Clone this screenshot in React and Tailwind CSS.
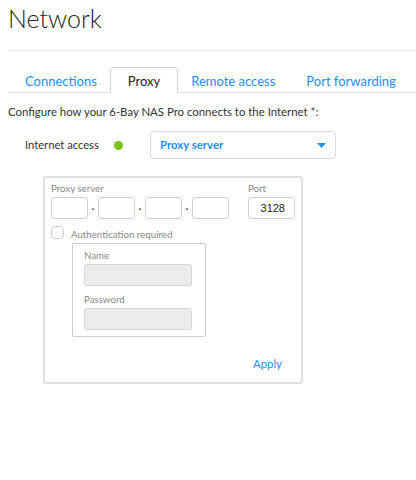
export default function App() {
  const blue = "text-[#1d8ff0]";
  const tabs = ["Connections", "Proxy", "Remote access", "Port forwarding"];
  return (
    <div className="w-[416px] h-[480px] bg-white font-['Lato','Noto_Sans',sans-serif] text-[#333]">
      <div className="pl-2">
        <h1 className="pt-[4px] text-[25px] leading-[29px] font-light text-[#222]">Network</h1>
        <div className="mt-[17px] border-t border-[#e6e6e6]" />
      </div>

      <div className="mt-[16px] ml-2 flex border-b border-[#dcdcdc] pl-[1.5px]">
        {tabs.map((t) =>
          t === "Proxy" ? (
            <div
              key={t}
              className="relative -mx-[2px] -mb-px shrink-0 whitespace-nowrap rounded-t-[4px] border border-[#d4d4d4] border-b-white bg-white px-[16.5px] pt-[5px] pb-[3px] text-[13px] leading-4 text-[#222]"
            >
              {t}
            </div>
          ) : (
            <div
              key={t}
              className={`-mb-px shrink-0 whitespace-nowrap border border-transparent px-[14.5px] pt-[5px] pb-[3px] text-[13px] leading-4 ${blue}`}
            >
              {t}
            </div>
          )
        )}
      </div>

      <div className="pl-2">
        <p className="mt-[11px] text-[11.4px] leading-4 text-[#333]">
          Configure how your 6-Bay NAS Pro connects to the Internet *:
        </p>

        <div className="mt-[11px] flex items-center pl-[17px]">
          <span className="w-[89px] text-[11.2px] leading-4 text-[#333]">Internet access</span>
          <span className="h-[9px] w-[9px] rounded-full bg-[#7ac51b]" />
          <div className="ml-[27px] flex h-[28px] w-[186px] items-center justify-between rounded-[4px] border border-[#dadada] pl-[9px] pr-[9px]">
            <span className={`text-[11.4px] font-bold leading-4 ${blue}`}>Proxy server</span>
            <svg width="9" height="5" viewBox="0 0 9 5" className="fill-[#1d8ff0]">
              <path d="M0 0h9L4.5 5z" />
            </svg>
          </div>
        </div>

        <div className="mt-[17px] ml-[35px] w-[260px] rounded-[3px] border-2 border-[#dedede] pl-[6px] pt-[3px] pb-[10px]">
          <div className="flex">
            <div>
              <div className="text-[9.7px] leading-[14px] text-[#8a8a8a]">Proxy server</div>
              <div className="mt-[2px] flex items-center">
                {[0, 1, 2, 3].map((i) => (
                  <div key={i} className="flex items-center">
                    {i > 0 && (
                      <span className="w-[10px] text-center text-[11px] leading-none text-[#333]">·</span>
                    )}
                    <div className="h-[22px] w-[37px] rounded-[3px] border border-[#d0d0d0]" />
                  </div>
                ))}
              </div>
            </div>
            <div className="ml-[19px]">
              <div className="text-[9.7px] leading-[14px] text-[#8a8a8a]">Port</div>
              <div className="mt-[2px] flex h-[22px] w-[47px] items-center justify-end rounded-[3px] border border-[#d0d0d0] pr-[9px] font-['Liberation_Sans',sans-serif] text-[11px] text-[#222]">
                3128
              </div>
            </div>
          </div>

          <div className="mt-[7px] flex items-start">
            <span className="h-[13px] w-[13px] rounded-[4px] border border-[#cfcfcf]" />
            <span className="ml-[7px] mt-px text-[9.7px] leading-[14px] text-[#8a8a8a]">Authentication required</span>
          </div>

          <div className="mt-[2px] ml-[21px] w-[134px] rounded-[2px] border border-[#cccccc] pl-[11px] pt-[4px] pb-[6px]">
            <div className="text-[9.7px] leading-[14px] text-[#8a8a8a]">Name</div>
            <div className="mt-[2px] h-[22px] w-[108px] rounded-[3px] border border-[#d6d6d6] bg-[#ececec]" />
            <div className="mt-[6px] text-[9.7px] leading-[14px] text-[#8a8a8a]">Password</div>
            <div className="mt-[2px] h-[22px] w-[108px] rounded-[3px] border border-[#d6d6d6] bg-[#ececec]" />
          </div>

          <div className="mt-[19px] flex justify-end pr-[19px]">
            <span className={`text-[11.4px] leading-4 ${blue}`}>Apply</span>
          </div>
        </div>
      </div>
    </div>
  );
}
